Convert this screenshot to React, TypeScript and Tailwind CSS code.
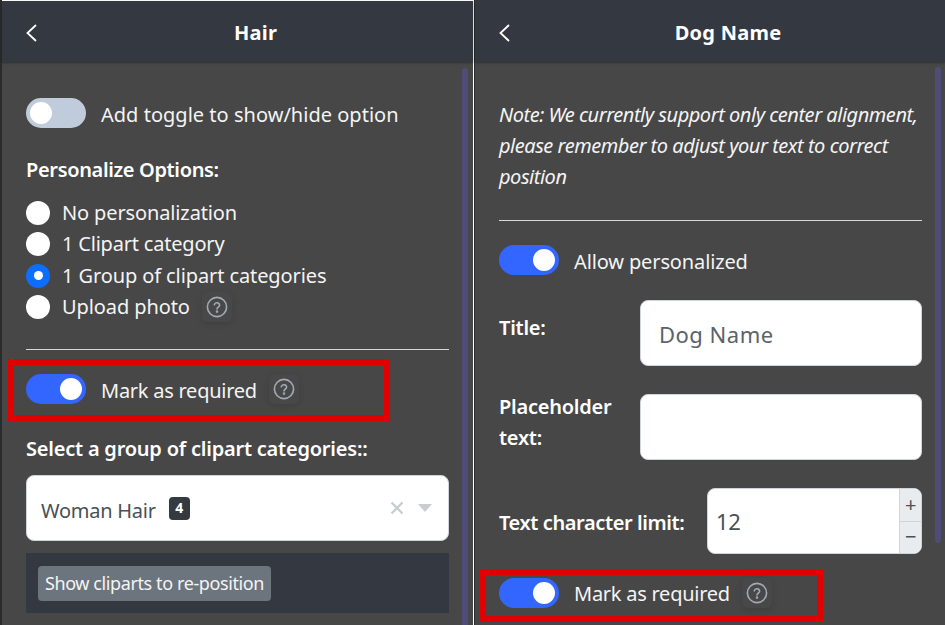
import React from "react";

const Toggle = ({ on }: { on?: boolean }) => (
  <div className={`flex h-[30px] w-[60px] shrink-0 items-center rounded-full px-1 ${on ? "justify-end bg-[#3366ff]" : "justify-start bg-[#c0ccdc]"}`}>
    <div className="h-[22px] w-[22px] rounded-full bg-white" />
  </div>
);

const Help = () => (
  <div className="flex h-[30px] w-[30px] items-center justify-center rounded-md bg-[#484848] shadow-[0_2px_6px_rgba(0,0,0,0.12)]">
    <svg width="22" height="22" viewBox="0 0 22 22" fill="none" stroke="#a3aab3" strokeWidth="1.6" strokeLinecap="round">
      <circle cx="11" cy="11" r="9.6" />
      <path d="M8.3 8.7a2.7 2.7 0 0 1 5.3.6c0 1.7-2.5 2-2.6 3.6" />
      <circle cx="11" cy="15.6" r="0.5" fill="#a3aab3" />
    </svg>
  </div>
);

const Radio = ({ label, on, help, track }: { label: string; on?: boolean; help?: boolean; track: string }) => (
  <div className="flex h-[31.5px] items-center">
    {on ? (
      <div className="flex h-6 w-6 items-center justify-center rounded-full bg-[#0d6efd]">
        <div className="h-[9px] w-[9px] rounded-full bg-white" />
      </div>
    ) : (
      <div className="h-6 w-6 rounded-full bg-white" />
    )}
    <span className={`ml-3 ${track}`}>{label}</span>
    {help && <div className="ml-3"><Help /></div>}
  </div>
);

const Header = ({ title, h, chevron }: { title: string; h: string; chevron: string }) => (
  <div className={`relative flex shrink-0 items-center justify-center bg-[#343941] pl-[36px] pt-[3px] shadow-[0_1px_2px_rgba(0,0,0,0.35)] ${h}`}>
    <svg className={`absolute left-[22px] ${chevron}`} width="14" height="20" viewBox="0 0 14 20" fill="none" stroke="#fff" strokeWidth="1.8">
      <path d="M12 2 L3.5 10 L12 18" />
    </svg>
    <span className="text-[20px] font-bold tracking-[0.25px] text-white">{title}</span>
  </div>
);

const Scrollbar = ({ cls }: { cls: string }) => (
  <div className={`absolute top-[67px] w-[6px] rounded-full bg-[#4f4d78] ${cls}`} />
);

const Required = ({ box, text }: { box: string; text: string }) => (
  <div className="relative flex h-[30px] items-center">
    <div className={`absolute border-[6px] border-[#e30000] ${box}`} />
    <Toggle on />
    <span className={`ml-[15px] ${text}`}>Mark as required</span>
    <div className="ml-3"><Help /></div>
  </div>
);

export default function App() {
  return (
    <div
      className="flex h-[625px] w-[945px] overflow-hidden bg-[#2b2b2b] text-[20px] leading-[30px] text-[#f4f4f4]"
      style={{ fontFamily: '"Noto Sans", sans-serif', letterSpacing: "-0.25px" }}
    >
      <div className="relative ml-[2px] flex h-[625px] w-[471px] flex-col border-t border-white bg-[#474747]">
        <Header title="Hair" h="h-[61px]" chevron="top-[22px]" />
        <Scrollbar cls="right-[5px] h-[560px]" />
        <div className="flex flex-col px-6 pt-[36px]">
          <div className="flex h-[30px] items-center">
            <Toggle />
            <span className="ml-[15px] pt-[4px] tracking-[0.02px]">Add toggle to show/hide option</span>
          </div>
          <div className="mt-[27px] font-semibold tracking-[-0.35px] text-white">Personalize Options:</div>
          <div className="mt-[12px] flex flex-col">
            <Radio label="No personalization" track="tracking-[-0.13px]" />
            <Radio label="1 Clipart category" track="tracking-[-0.2px]" />
            <Radio label="1 Group of clipart categories" track="tracking-[-0.1px]" on />
            <Radio label="Upload photo" track="tracking-[-0.1px]" help />
          </div>
          <div className="mt-[26px] h-px bg-[#d8d8d8]" />
          <div className="mt-[24px]">
            <Required text="pt-[4px]" box="-left-[18px] -top-[15px] h-[62px] w-[382px]" />
          </div>
          <div className="mt-[30px] font-semibold tracking-[-0.22px] text-white">Select a group of clipart categories::</div>
          <div className="mt-[11px] flex h-[66px] items-center rounded-lg border border-[#ced4da] bg-white pl-[14px] pr-4 text-[#495057]">
            <span className="pt-[5px]">Woman Hair</span>
            <span className="ml-[13px] flex h-[23px] w-[21px] items-center justify-center rounded bg-[#343a40] text-[14px] font-bold text-white">4</span>
            <span className="ml-auto flex items-center gap-[14px]">
              <svg width="14" height="14" viewBox="0 0 14 14" stroke="#c9cdd2" strokeWidth="2.4"><path d="M1.5 1.5 L12.5 12.5 M12.5 1.5 L1.5 12.5" /></svg>
              <svg width="14" height="8" viewBox="0 0 14 8"><path d="M0 0 H14 L7 8 Z" fill="#c9cdd2" /></svg>
            </span>
          </div>
          <div className="mt-3 flex h-[60px] items-center bg-[#343941] px-3">
            <div className="flex h-[35px] items-center rounded bg-[#6c757d] px-[7px] text-[18px] tracking-[-0.4px] text-[#f4f4f4]">Show cliparts to re-position</div>
          </div>
        </div>
      </div>
      <div className="h-[625px] w-px bg-white" />
      <div className="relative ml-px flex h-[625px] w-[470px] flex-col bg-[#474747]">
        <Header title="Dog Name" h="h-[62px]" chevron="top-[23px]" />
        <Scrollbar cls="right-[4px] h-[476px]" />
        <div className="flex flex-col pl-6 pr-[23px] pt-[37px]">
          <p className="italic leading-[31px] tracking-[-0.47px]">Note: We currently support only center alignment, please remember to adjust your text to correct position</p>
          <div className="mt-[28px] h-px bg-[#d8d8d8]" />
          <div className="mt-[24px] flex h-[30px] items-center">
            <Toggle on />
            <span className="ml-[15px] pt-[4px] tracking-[-0.13px]">Allow personalized</span>
          </div>
          <div className="mt-[25px] flex h-[66px]">
            <div className="w-[141px] pt-[13px] font-semibold text-white">Title:</div>
            <div className="flex flex-1 items-center rounded-lg border border-[#ced4da] bg-white pl-[18px] pt-[2px] text-[22px] tracking-[0.5px] text-[#5b626a]">Dog Name</div>
          </div>
          <div className="mt-[28px] flex h-[66px]">
            <div className="w-[141px] -mt-[3px] font-semibold leading-[31px] text-white">Placeholder text:</div>
            <div className="flex-1 rounded-lg border border-[#ced4da] bg-white" />
          </div>
          <div className="mt-[28px] flex h-[66px] items-center">
            <div className="w-[208px] pt-[4px] font-semibold tracking-[-0.4px] text-white">Text character limit:</div>
            <div className="flex h-full flex-1 overflow-hidden rounded-lg border border-[#ced4da] bg-white">
              <div className="flex flex-1 items-center pl-2 text-[22px] text-[#495057]">12</div>
              <div className="flex w-[22px] flex-col border-l border-[#ced4da] bg-[#e9ecef] text-[#495057]">
                <div className="flex flex-1 items-center justify-center border-b border-[#ced4da] text-[20px]">+</div>
                <div className="flex flex-1 items-center justify-center text-[20px]">−</div>
              </div>
            </div>
          </div>
          <div className="mt-[24px]">
            <Required text="pt-[2px]" box="-left-[19px] -top-[9px] h-[53px] w-[343px]" />
          </div>
        </div>
      </div>
    </div>
  );
}
